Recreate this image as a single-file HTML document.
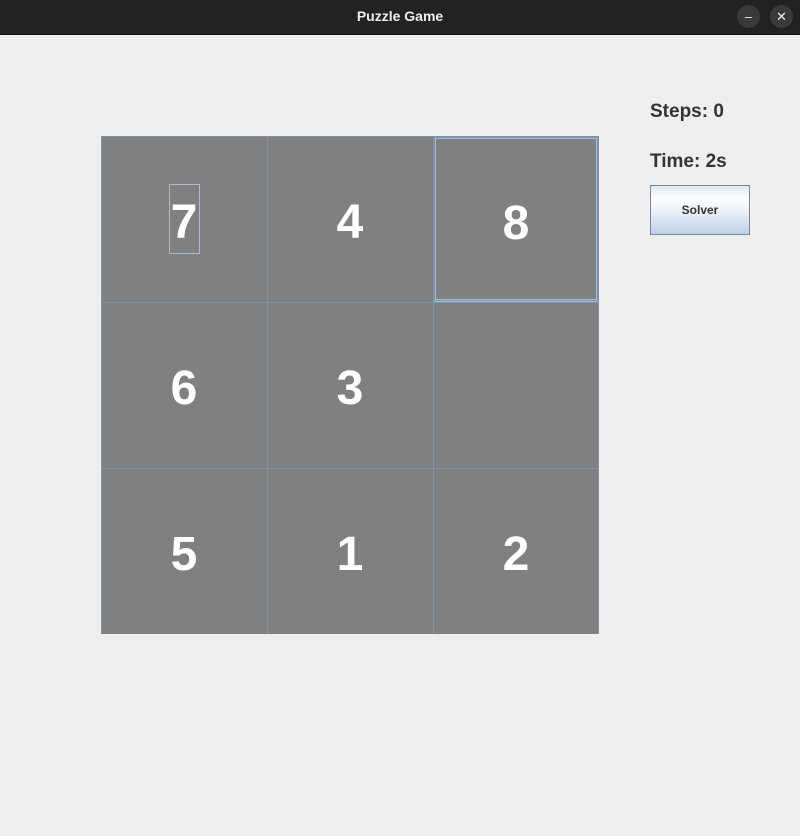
<!DOCTYPE html>
<html><head><style>
body{margin:0;width:800px;height:836px;background:#eeeeee;position:relative;overflow:hidden;font-family:"Liberation Sans","DejaVu Sans",sans-serif}
.tb{position:absolute;left:0;top:0;width:800px;height:34px;background:#222;border-bottom:1px solid #111}
.tt{position:absolute;left:0;width:800px;top:8px;text-align:center;color:#eee;font-size:14px;font-weight:bold}
.cb{position:absolute;top:5px;width:23px;height:23px;border-radius:50%;background:#3a3a3a;color:#eee;font-size:13px;text-align:center;line-height:23px}
.grid{position:absolute;left:101px;top:136px;width:498px;height:498px;background:#808080}
.c{position:absolute;width:166px;height:166px;box-sizing:border-box;color:#fff;font-weight:bold;font-size:48px;text-align:center;line-height:174px}
.vl{position:absolute;top:0;width:1px;height:498px;background:#7b93ad}
.hl{position:absolute;left:0;height:1px;width:498px;background:#7b93ad}
.lbl{position:absolute;left:650px;font-weight:bold;font-size:19px;color:#333}
.btn{position:absolute;left:650px;top:185px;width:98px;height:48px;border:1px solid #7a8799;background:linear-gradient(#dde8f3,#fff 25%,#e4ecf5 60%,#bcd0e6);font-size:12px;font-weight:bold;color:#333;text-align:center;line-height:48px}
</style></head><body>
<div class="tb"><div class="tt">Puzzle Game</div>
<div class="cb" style="left:737px">&#8211;</div><div class="cb" style="left:770px">&#10005;</div></div>
<div class="grid">
<div class="c" style="left:0;top:0">7</div>
<div style="position:absolute;left:68px;top:48px;width:31px;height:70px;border:1px solid #a8bcd4;box-sizing:border-box"></div>
<div class="c" style="left:166px;top:0">4</div>
<div class="c" style="left:332px;top:0;border:1px solid #a8bcd4;box-shadow:inset 0 0 0 1px #7b93ad, inset 0 0 0 2px #a8bcd4">8</div>
<div class="c" style="left:0;top:166px">6</div>
<div class="c" style="left:166px;top:166px">3</div>
<div class="c" style="left:0;top:332px">5</div>
<div class="c" style="left:166px;top:332px">1</div>
<div class="c" style="left:332px;top:332px">2</div>
<div class="vl" style="left:0"></div><div class="vl" style="left:166px"></div><div class="vl" style="left:332px"></div><div class="vl" style="left:497px"></div>
<div class="hl" style="top:0"></div><div class="hl" style="top:166px"></div><div class="hl" style="top:332px"></div>
</div>
<div class="lbl" style="top:101px">Steps: 0</div>
<div class="lbl" style="top:151px">Time: 2s</div>
<div class="btn">Solver</div>
</body></html>
